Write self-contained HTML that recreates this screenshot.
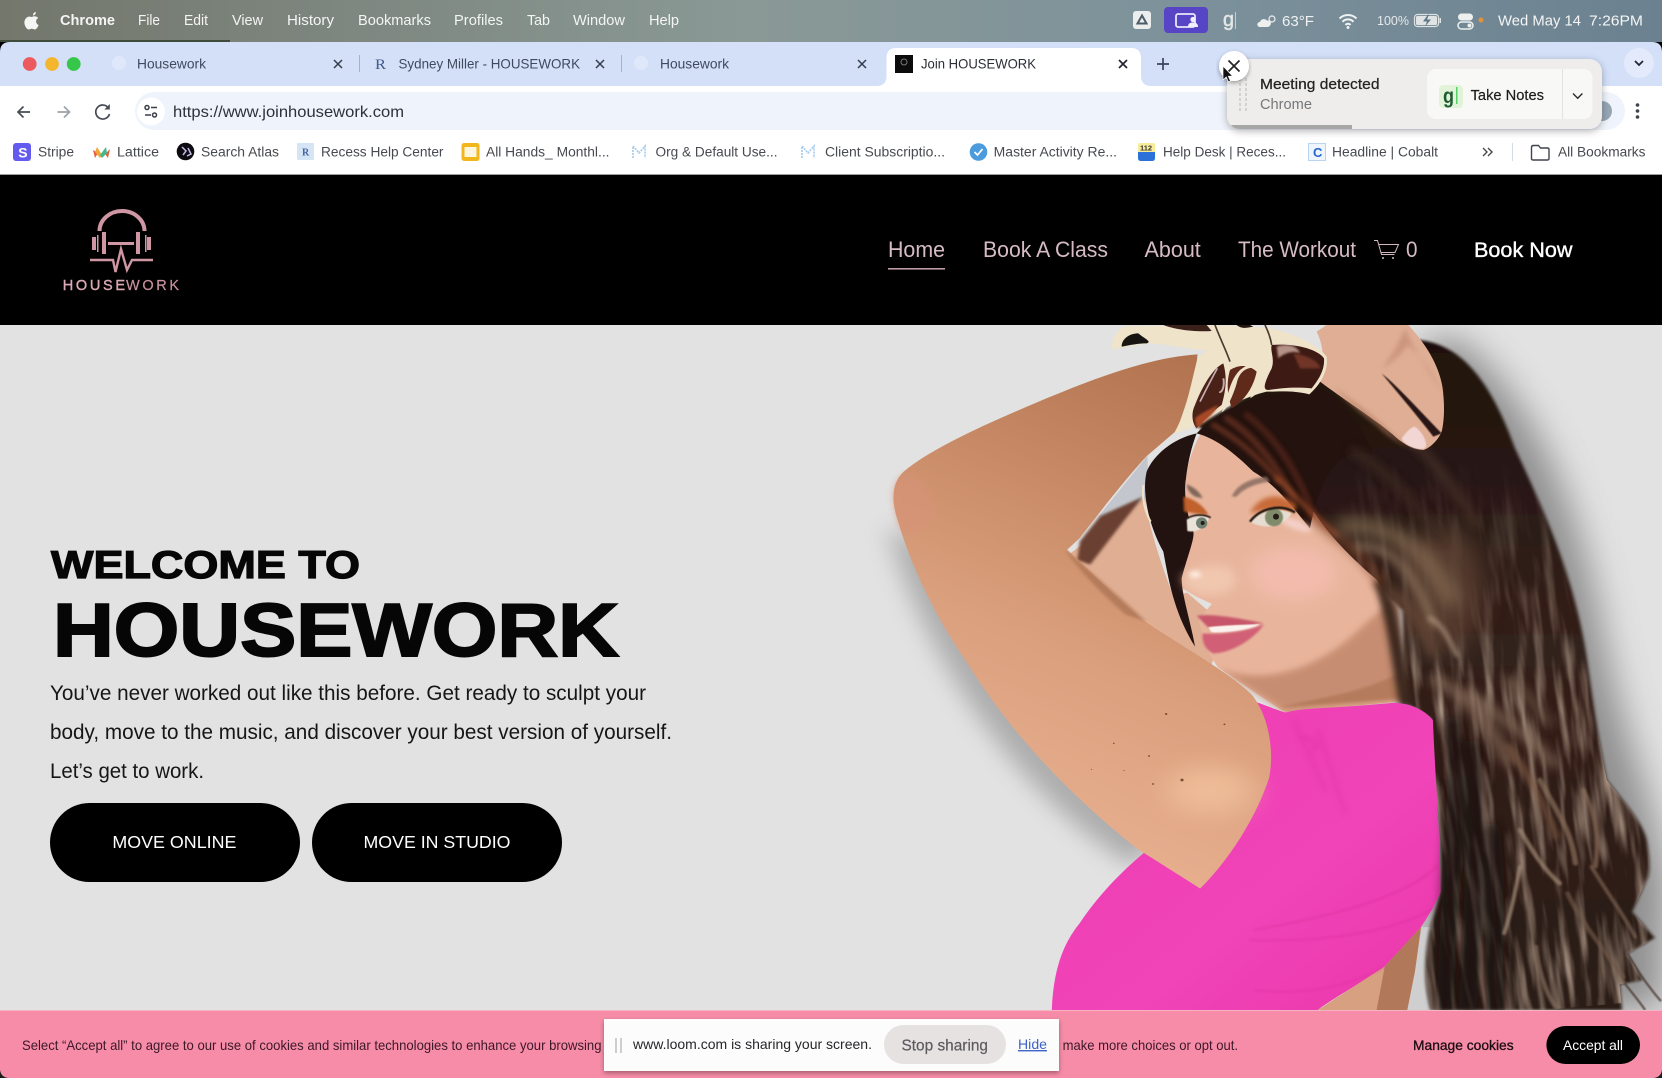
<!DOCTYPE html>
<html><head><meta charset="utf-8"><title>Join HOUSEWORK</title>
<style>
html,body{margin:0;padding:0;background:#000;width:1662px;height:1078px;overflow:hidden}
svg{display:block}
svg svg.v{overflow:visible}
text{font-family:"Liberation Sans",sans-serif;white-space:pre}
.m{font-size:14.5px;fill:#f4f5f4}
.t{font-size:14px;fill:#3f4a5e}
.b{font-size:13.5px;fill:#474a50}
.n{font-size:22px;fill:#d6bbc5}
.c{font-size:14px;fill:#3c1828}
</style></head><body>
<svg width="1662" height="1078" viewBox="0 0 1662 1078" xmlns="http://www.w3.org/2000/svg">
<defs>
<linearGradient id="menu" x1="0" x2="1" y1="0" y2="0"><stop offset="0" stop-color="#73776c"/><stop offset=".45" stop-color="#8a9996"/><stop offset=".7" stop-color="#7d929b"/><stop offset="1" stop-color="#6b8190"/></linearGradient>
<linearGradient id="arm" x1="0.75" y1="0" x2="0.45" y2="1"><stop offset="0" stop-color="#b27450"/><stop offset=".3" stop-color="#c88a66"/><stop offset=".6" stop-color="#dba07e"/><stop offset="1" stop-color="#eab393"/></linearGradient>
<linearGradient id="hair" x1="0" y1="0" x2="0" y2="1"><stop offset="0" stop-color="#1f110d"/><stop offset=".45" stop-color="#33201a"/><stop offset="1" stop-color="#2a1c16"/></linearGradient>
<linearGradient id="top" x1="0" y1="0" x2="1" y2="1"><stop offset="0" stop-color="#ee3cb1"/><stop offset=".6" stop-color="#f044b8"/><stop offset="1" stop-color="#ea36aa"/></linearGradient>
<linearGradient id="fade" x1="0" y1="0" x2="0" y2="1"><stop offset=".2" stop-color="#000"/><stop offset=".55" stop-color="#fff"/></linearGradient>
<mask id="fadem" maskUnits="userSpaceOnUse" x="0" y="0" width="1568" height="1568"><rect width="1568" height="1568" fill="url(#fade)"/></mask>
<filter id="b1" filterUnits="userSpaceOnUse" x="-300" y="-300" width="2400" height="2400"><feGaussianBlur stdDeviation="1.200"/></filter>
<filter id="b3" filterUnits="userSpaceOnUse" x="-300" y="-300" width="2400" height="2400"><feGaussianBlur stdDeviation="3"/></filter>
<filter id="b6" filterUnits="userSpaceOnUse" x="-300" y="-300" width="2400" height="2400"><feGaussianBlur stdDeviation="7"/></filter>
<filter id="b14" filterUnits="userSpaceOnUse" x="-300" y="-300" width="2400" height="2400"><feGaussianBlur stdDeviation="14"/></filter>
<filter id="b20" filterUnits="userSpaceOnUse" x="-300" y="-300" width="2400" height="2400"><feGaussianBlur stdDeviation="24"/></filter>
<filter id="b40" filterUnits="userSpaceOnUse" x="-300" y="-300" width="2400" height="2400"><feGaussianBlur stdDeviation="36"/></filter>
<filter id="tex" filterUnits="userSpaceOnUse" x="1000" y="0" width="600" height="1568"><feTurbulence type="fractalNoise" baseFrequency=".05 .005" numOctaves="3" seed="7"/><feColorMatrix type="matrix" values="0 0 0 0 .42  0 0 0 0 .31  0 0 0 0 .24  0 0 2.200 0 -.98"/><feGaussianBlur stdDeviation="1.500"/></filter>
<filter id="sh" x="-10%" y="-20%" width="120%" height="150%"><feDropShadow dx="0" dy="2" stdDeviation="4" flood-color="#000" flood-opacity=".3"/></filter>
<filter id="sh2" x="-10%" y="-20%" width="120%" height="150%"><feDropShadow dx="0" dy="2" stdDeviation="2.500" flood-color="#000" flood-opacity=".35"/></filter>
<clipPath id="photo"><rect x="0" y="12" width="1568" height="1556"/></clipPath>
<clipPath id="hairclip"><path d="M1085 45C1170 50 1230 130 1280 290 1340 440 1395 580 1420 760 1432 860 1445 960 1460 1045 1490 1090 1530 1140 1538 1181 1545 1230 1545 1260 1538 1272L1510 1345 1554 1404 1500 1440 1530 1500 1485 1510 1490 1568H1116C1100 1500 1105 1440 1113 1390L1135 1300C1140 1200 1132 1100 1120 1045L1115 905 1062 866V660L660 240 790 150Z"/></clipPath>
<clipPath id="heroclip"><rect x="860" y="325" width="802" height="685"/></clipPath>
</defs>

<!-- macOS menu bar -->
<rect width="1662" height="42" fill="url(#menu)"/>
<rect x="0" y="40" width="230" height="2" fill="#3f4c3b"/>
<path d="M33 15.500c1.800-.2 3-1.700 2.900-3.500-1.800.2-3.200 1.800-2.900 3.500zM30 16.500c-3.200 0-5.600 2.600-5.600 6 0 3.200 2.400 7 4.400 7 1 0 1.500-.7 3-.7s1.900.7 3 .7c1.500 0 3-2.200 3.800-4.500-3.300-1.500-3.300-5.500-.3-7-1-1.200-2.500-1.800-3.800-1.800-1.500 0-2.300.8-3.100.8-.7 0-1.500-.5-1.400-.5z" fill="#f5f5f3"/>
<text class="m" x="60" y="25" textLength="55" lengthAdjust="spacingAndGlyphs" font-weight="700">Chrome</text>
<text class="m" x="138" y="25" textLength="22" lengthAdjust="spacingAndGlyphs">File</text>
<text class="m" x="184" y="25" textLength="24" lengthAdjust="spacingAndGlyphs">Edit</text>
<text class="m" x="232" y="25" textLength="31" lengthAdjust="spacingAndGlyphs">View</text>
<text class="m" x="287" y="25" textLength="47" lengthAdjust="spacingAndGlyphs">History</text>
<text class="m" x="358" y="25" textLength="73" lengthAdjust="spacingAndGlyphs">Bookmarks</text>
<text class="m" x="454" y="25" textLength="49" lengthAdjust="spacingAndGlyphs">Profiles</text>
<text class="m" x="527" y="25" textLength="23" lengthAdjust="spacingAndGlyphs">Tab</text>
<text class="m" x="573" y="25" textLength="52" lengthAdjust="spacingAndGlyphs">Window</text>
<text class="m" x="649" y="25" textLength="30" lengthAdjust="spacingAndGlyphs">Help</text>

<rect x="1133" y="11" width="18" height="18" rx="3" fill="#eceeee"/>
<path d="M1142 15.500l4.500 8h-9z" fill="none" stroke="#4c5c68" stroke-width="2"/>
<rect x="1164" y="7" width="44" height="26" rx="4" fill="#5646c6"/>
<rect x="1176" y="14" width="19" height="13" rx="2" fill="none" stroke="#e9e6fb" stroke-width="1.800"/>
<circle cx="1193" cy="19.500" r="2.600" fill="#f2f0ff"/><path d="M1188 27c0-3.500 2-4.500 5-4.500s5 1 5 4.500z" fill="#f2f0ff"/>
<text x="1223" y="26" font-size="20" fill="#e3e6e6" stroke="#e3e6e6" stroke-width=".5" textLength="11" lengthAdjust="spacingAndGlyphs">g</text><rect x="1235" y="12" width="1" height="17" fill="#c5cfd2"/>
<path d="M1260 27c-3.500 0-3.500-5 0-5 .5-3 5-4 7-1.500 3.500-.5 5 3 3 5-.5 1-1.500 1.500-3 1.500z" fill="#eef0f0"/><circle cx="1272" cy="19" r="3" fill="none" stroke="#eef0f0" stroke-width="1.200"/>
<text x="1282" y="26" font-size="15" fill="#f0f2f2" textLength="32" lengthAdjust="spacingAndGlyphs">63°F</text>
<path d="M1339.500 18.500a12 12 0 0 1 17 0M1342.500 21.800a7.500 7.500 0 0 1 11 0M1345.500 25a3.200 3.200 0 0 1 5 0" fill="none" stroke="#f0f2f2" stroke-width="2"/><circle cx="1348" cy="27.500" r="1.500" fill="#f0f2f2"/>
<text x="1377" y="25" font-size="12.500" fill="#e6eaea" textLength="32" lengthAdjust="spacingAndGlyphs">100%</text>
<rect x="1414.500" y="14.500" width="24" height="12" rx="3" fill="none" stroke="#dfe3e3" stroke-width="1.200"/><rect x="1416" y="16" width="21" height="9" rx="1.500" fill="#dfe3e3"/><path d="M1428 14.500l-5 7h4l-2 5 6-7h-4l2-5z" fill="#5f7786"/><rect x="1439.500" y="18" width="1.500" height="5" fill="#dfe3e3"/>
<rect x="1458" y="13.500" width="15" height="7" rx="3.500" fill="#eef0f0"/><rect x="1458" y="22" width="15" height="7" rx="3.500" fill="none" stroke="#eef0f0" stroke-width="1.500"/><circle cx="1469.500" cy="25.500" r="2" fill="#eef0f0"/>
<circle cx="1481" cy="20" r="2.500" fill="#e3913a"/>
<text class="m" x="1498" y="25.500" font-size="15" textLength="83" lengthAdjust="spacingAndGlyphs">Wed May 14</text>
<text class="m" x="1589" y="25.500" font-size="15" textLength="54" lengthAdjust="spacingAndGlyphs">7:26PM</text>

<!-- chrome window -->
<path d="M0 52q0-10 10-10H1652q10 0 10 10V176H0z" fill="#d3e0f8"/>
<rect x="0" y="86" width="1662" height="90" fill="#fff"/>
<circle cx="29.700" cy="64" r="6.900" fill="#ec5a60"/>
<circle cx="52" cy="64" r="6.900" fill="#f5b62f"/>
<circle cx="73.700" cy="64" r="6.900" fill="#35c64a"/>

<circle cx="119" cy="63" r="7" fill="#dfe8fb"/>
<text class="t" x="137" y="68.500" textLength="69" lengthAdjust="spacingAndGlyphs">Housework</text>
<path d="M334 60l8 8M342 60l-8 8" stroke="#333c4c" stroke-width="1.500"/>
<rect x="359" y="55" width="1" height="17" fill="#a7b3c9"/>
<text x="375" y="69" font-size="15" fill="#43588c" textLength="11" lengthAdjust="spacingAndGlyphs" style="font-family:'Liberation Serif',serif">R</text>
<text class="t" x="398.500" y="68.500" textLength="181.500" lengthAdjust="spacingAndGlyphs">Sydney Miller - HOUSEWORK</text>
<path d="M596 60l8 8M604 60l-8 8" stroke="#333c4c" stroke-width="1.500"/>
<rect x="621" y="55" width="1" height="17" fill="#a7b3c9"/>
<circle cx="641" cy="63" r="7" fill="#dfe8fb"/>
<text class="t" x="660" y="68.500" textLength="69" lengthAdjust="spacingAndGlyphs">Housework</text>
<path d="M858 60l8 8M866 60l-8 8" stroke="#333c4c" stroke-width="1.500"/>

<path d="M878 86q8.500-1 8.500-10V58q0-10 10-10H1131q10 0 10 10V76q0 9 9 10z" fill="#fff"/>
<rect x="895" y="55" width="18" height="18" fill="#0c0c0c"/><circle cx="904" cy="62" r="3" fill="none" stroke="#777" stroke-width="1"/>
<text class="t" x="921" y="68.500" style="fill:#2c2f36" textLength="115" lengthAdjust="spacingAndGlyphs">Join HOUSEWORK</text>
<path d="M1119 60l8 8M1127 60l-8 8" stroke="#20242c" stroke-width="1.700"/>
<path d="M1163 58v12M1157 64h12" stroke="#3d4658" stroke-width="1.700"/>
<circle cx="1639" cy="63" r="15" fill="#e2eafb"/>
<path d="M1635 61l4 4 4-4" fill="none" stroke="#20242c" stroke-width="1.700"/>

<!-- toolbar -->
<rect x="135" y="92" width="1490" height="38" rx="19" fill="#eff3fb"/>
<path d="M30 112H18M23.500 106.500L18 112l5.500 5.500" fill="none" stroke="#474c55" stroke-width="1.700"/>
<path d="M57.500 112H69.500M64 106.500L69.500 112 64 117.500" fill="none" stroke="#9fa3aa" stroke-width="1.700"/>
<path d="M108.500 108a7 7 0 1 0 1 6" fill="none" stroke="#474c55" stroke-width="1.700"/><path d="M109.800 104v5.500h-5.500z" fill="#474c55"/>
<circle cx="151" cy="111.500" r="14" fill="#fff"/>
<circle cx="147" cy="107.500" r="2" fill="none" stroke="#3a3f48" stroke-width="1.500"/><path d="M151 107.500h6M145 115h6" stroke="#3a3f48" stroke-width="1.500"/><circle cx="154.500" cy="115" r="2" fill="none" stroke="#3a3f48" stroke-width="1.500"/>
<text x="173" y="117" font-size="16" fill="#2e3138" textLength="231" lengthAdjust="spacingAndGlyphs">https://www.joinhousework.com</text>
<circle cx="1602" cy="111" r="10" fill="#96a6b4"/>
<circle cx="1637.500" cy="105" r="1.800" fill="#3f444c"/><circle cx="1637.500" cy="111" r="1.800" fill="#3f444c"/><circle cx="1637.500" cy="117" r="1.800" fill="#3f444c"/>

<!-- bookmarks -->
<rect x="13" y="143" width="18" height="18" rx="3" fill="#635bf0"/>
<text x="18.300" y="157.500" font-size="14" font-weight="700" fill="#fff">S</text>
<text class="b" x="38" y="156.500" textLength="36" lengthAdjust="spacingAndGlyphs">Stripe</text>
<path d="M93 150l5 3-3 5zM110 149l-5 5 3 4z" fill="#e4603c"/><path d="M97 147l5 8-2 3-5-6z" fill="#f0a63a"/><path d="M106 147l-6 8 2 3 5-5z" fill="#3fba8f"/>
<text class="b" x="117" y="156.500" textLength="42" lengthAdjust="spacingAndGlyphs">Lattice</text>
<circle cx="185.500" cy="151.500" r="8.800" fill="#0b0b10"/><path d="M182 147l4 4-3 4M188 148l3 6-4 2" fill="none" stroke="#c6b9e5" stroke-width="1.500"/>
<text class="b" x="201" y="156.500" textLength="78" lengthAdjust="spacingAndGlyphs">Search Atlas</text>
<rect x="297" y="143" width="17" height="17" rx="1" fill="#d6e5f5"/>
<text x="302" y="155.500" font-size="10" font-weight="700" fill="#47659c" style="font-family:'Liberation Serif',serif">R</text>
<text class="b" x="321" y="156.500" textLength="122.500" lengthAdjust="spacingAndGlyphs">Recess Help Center</text>
<rect x="461.500" y="143" width="18" height="18" rx="2.500" fill="#f3b71e"/><rect x="464.500" y="147" width="12" height="10" fill="#fdf6df"/>
<text class="b" x="486" y="156.500" textLength="123.500" lengthAdjust="spacingAndGlyphs">All Hands_ Monthl...</text>
<path d="M633 158v-12l6 7 6-7v12" fill="none" stroke="#a7cdee" stroke-width="1.700" stroke-dasharray="2 1"/>
<text class="b" x="655.500" y="156.500" textLength="122" lengthAdjust="spacingAndGlyphs">Org &amp; Default Use...</text>
<path d="M802 158v-12l6 7 6-7v12" fill="none" stroke="#a7cdee" stroke-width="1.700" stroke-dasharray="2 1"/>
<text class="b" x="825" y="156.500" textLength="120" lengthAdjust="spacingAndGlyphs">Client Subscriptio...</text>
<circle cx="978.500" cy="152" r="8.800" fill="#4c9bdc"/><path d="M974.500 152l3 3 5-6" fill="none" stroke="#fff" stroke-width="1.700"/>
<text class="b" x="993.700" y="156.500" textLength="123.300" lengthAdjust="spacingAndGlyphs">Master Activity Re...</text>
<rect x="1138" y="143" width="17" height="17" rx="2" fill="#f7ec9a"/><path d="M1138 152h17v6q0 3-3 3h-11q-3 0-3-3z" fill="#2c70d9"/>
<text x="1140" y="150.500" font-size="7.500" font-weight="700" fill="#333">112</text>
<text class="b" x="1163" y="156.500" textLength="123" lengthAdjust="spacingAndGlyphs">Help Desk | Reces...</text>
<rect x="1308.500" y="143.500" width="17" height="17" fill="#eef5fe" stroke="#b9d4f0"/>
<text x="1313" y="157" font-size="13" font-weight="700" fill="#2566c9">C</text>
<text class="b" x="1332" y="156.500" textLength="106" lengthAdjust="spacingAndGlyphs">Headline | Cobalt</text>
<path d="M1483 148l4 4-4 4M1488 148l4 4-4 4" fill="none" stroke="#474a50" stroke-width="1.400"/>
<rect x="1512" y="143" width="1" height="18" fill="#d2dbe8"/>
<path d="M1531.500 147.500q0-2 2-2h5l2 2.500h7q1.500 0 1.500 1.500v9q0 1.500-1.500 1.500h-14.500q-1.500 0-1.500-1.500z" fill="none" stroke="#3f444c" stroke-width="1.400"/>
<text class="b" x="1558" y="156.500" textLength="87.500" lengthAdjust="spacingAndGlyphs">All Bookmarks</text>
<rect x="0" y="174" width="1662" height="1" fill="#9c9ea2"/>

<!-- site nav -->
<rect x="0" y="175" width="1662" height="150" fill="#000"/>
<path d="M99.500 231a22.500 20 0 0 1 45 0" fill="none" stroke="#cf96a3" stroke-width="4"/>
<g fill="#cf96a3">
<rect x="92" y="237" width="4" height="13"/><rect x="97" y="235" width="1.500" height="17"/><rect x="102" y="232" width="4" height="22"/>
<rect x="136" y="232" width="4" height="22"/><rect x="145" y="235" width="1.500" height="17"/><rect x="147" y="237" width="4" height="13"/>
<rect x="108" y="242" width="26" height="3"/>
</g>
<path d="M90 260H113L115.500 272 121 249 127 270 132 260H153" fill="none" stroke="#cf96a3" stroke-width="2.400"/>
<text x="62.700" y="290" font-size="14.500" fill="#dcaab5" stroke="#dcaab5" stroke-width=".4" textLength="62.300" lengthAdjust="spacing">HOUSE</text>
<text x="126" y="290" font-size="14.500" fill="#c9929f" stroke="#c9929f" stroke-width=".2" textLength="53" lengthAdjust="spacing">WORK</text>

<text class="n" x="888" y="257" textLength="57" lengthAdjust="spacingAndGlyphs">Home</text>
<rect x="888" y="268" width="57" height="1.600" fill="#bc9aa6"/>
<text class="n" x="983" y="257" textLength="125" lengthAdjust="spacingAndGlyphs">Book A Class</text>
<text class="n" x="1144.500" y="257" textLength="56.300" lengthAdjust="spacingAndGlyphs">About</text>
<text class="n" x="1238" y="257" textLength="118" lengthAdjust="spacingAndGlyphs">The Workout</text>
<path d="M1374 240.500h3.500l4 14h13M1378.500 244.500h20l-3.500 8h-14.500" fill="none" stroke="#d3b8c2" stroke-width="1"/>
<circle cx="1383" cy="258" r="1" fill="#d3b8c2"/><circle cx="1393" cy="258" r="1" fill="#d3b8c2"/>
<text class="n" x="1406" y="257" textLength="11.500" lengthAdjust="spacingAndGlyphs">0</text>
<text x="1474" y="257" font-size="21" fill="#fff" stroke="#fff" stroke-width=".35" textLength="98.500" lengthAdjust="spacingAndGlyphs">Book Now</text>

<!-- hero -->
<rect x="0" y="325" width="1662" height="690" fill="#e2e2e2"/>
<svg x="860" y="320" width="802" height="690" viewBox="0 0 1568 1568" preserveAspectRatio="none">
<g clip-path="url(#photo)">
<rect x="0" y="0" width="1568" height="1568" fill="#e2e2e2"/>
<!-- cast shadows -->
<path d="M1150 30C1290 130 1400 380 1450 700 1490 950 1568 1130 1580 1300L1568 1568H1100V60Z" fill="#707070" opacity=".72" filter="url(#b40)"/>
<path d="M55 470C105 710 285 1070 540 1245L620 1100 300 600Z" fill="#8a8a8a" opacity=".6" filter="url(#b20)"/>
<polygon points="1070,1568 1098,1380 1120,1380 1120,1568" fill="#cfcfcf"/>
<!-- hair base -->
<path d="M1085 45C1170 50 1230 130 1280 290 1340 440 1395 580 1420 760 1432 860 1445 960 1460 1045 1490 1090 1530 1140 1538 1181 1545 1230 1545 1260 1538 1272L1510 1345 1554 1404 1500 1440 1530 1500 1485 1510 1490 1568H1116C1100 1500 1105 1440 1113 1390L1135 1300C1140 1200 1132 1100 1120 1045L1115 905 1062 866V660L660 240 790 150Z" fill="url(#hair)" filter="url(#b3)"/>
<path d="M1500 1440C1520 1480 1545 1520 1566 1548M1490 1500C1510 1530 1525 1550 1535 1568" fill="none" stroke="#4a382e" stroke-width="5" opacity=".7" filter="url(#b1)"/>
<g clip-path="url(#hairclip)"><g mask="url(#fadem)"><rect x="1000" y="0" width="600" height="1568" filter="url(#tex)" transform="rotate(-6 1300 800)"/></g></g>
<!-- gap behind arm -->
<polygon points="465,448 562,308 565,412" fill="#c3c7cd"/>
<!-- back arm -->
<path d="M400 540L556 405C565 470 590 560 612 625L640 620 720 700 680 800 600 750 480 650Z" fill="#e0ae92"/>
<path d="M430 503L469 446 554 401 515 458 450 556 425 545Z" fill="#6b4030" filter="url(#b3)"/>
<!-- neck + face -->
<path d="M680 235C650 280 635 340 632 410 628 450 640 500 640 520 630 550 625 590 630 610L660 630 688 645 662 680 675 745 700 790 790 860 832 892 1062 866 1050 660 1010 590C950 530 900 470 860 385 800 300 740 260 680 235Z" fill="#e8b59c"/>
<path d="M700 790C780 830 880 800 960 720 1000 680 1030 640 1050 640L1064 866 832 892Z" fill="#c08468" opacity=".8" filter="url(#b6)"/>
<path d="M820 880L1060 860 1058 800C980 850 890 860 820 880Z" fill="#a9704f" opacity=".6" filter="url(#b3)"/>
<path d="M1015 590C1040 650 1050 760 1068 880" fill="none" stroke="#3a261d" stroke-width="26" filter="url(#b6)"/>
<!-- top -->
<path d="M750 860C785 870 810 885 832 892 870 880 900 885 1042 870 1085 870 1110 895 1120 909 1125 1050 1135 1180 1135 1300 1125 1330 1105 1365 1097 1379 1065 1425 1040 1450 1026 1469 990 1500 920 1545 895 1568H375C378 1480 395 1420 430 1370 470 1300 520 1245 557 1209L620 1180 760 1000Z" fill="url(#top)"/>
<path d="M895 1568L1026 1469 1097 1379 1085 1480 1070 1568Z" fill="#d7a080"/>
<path d="M1026 1469L1097 1379 1085 1480 1070 1568H1010Z" fill="#a86f50" opacity=".8"/>
<!-- arm -->
<path d="M660 78C560 85 440 140 310 205 220 250 130 300 85 345 62 370 60 410 75 460 100 560 150 680 210 780 290 930 400 1070 540 1200L665 1292C720 1230 775 1130 800 1040 810 980 800 900 765 850 720 800 640 750 547 677 500 630 450 570 405 522L430 495C460 450 520 360 560 310L620 250 655 130Z" fill="url(#arm)"/>
<path d="M85 350C60 375 60 410 75 460 85 500 110 490 140 450 150 400 120 350 85 350Z" fill="#d79378" opacity=".6" filter="url(#b6)"/>
<path d="M400 522C450 570 510 630 560 685L520 670C470 620 430 570 400 522Z" fill="#a26b4b" opacity=".6" filter="url(#b3)"/>
</g>
</svg>

<!-- lower photo detail -->
<g clip-path="url(#heroclip)">
<svg class="v" x="1040" y="680" width="622" height="330" viewBox="0 0 1568 990" preserveAspectRatio="none">
<ellipse cx="430" cy="330" rx="110" ry="70" fill="#f9cfa8" opacity=".55" filter="url(#b40)"/>
<g fill="#7c4a30"><circle cx="318" cy="102" r="3"/><circle cx="465" cy="133" r="2.500"/><circle cx="186" cy="190" r="2"/><circle cx="275" cy="228" r="2.500"/><circle cx="358" cy="300" r="4"/><circle cx="285" cy="312" r="2.500"/><circle cx="130" cy="268" r="1.500"/><circle cx="212" cy="272" r="1.500"/></g>
<g fill="none" stroke-linecap="round">
<path d="M640 120C660 180 700 280 720 330M700 150C720 210 740 300 770 400" stroke="#d62c98" stroke-width="10" opacity=".3" filter="url(#b6)"/>
<path d="M660 175C680 165 710 195 690 210" stroke="#db309c" stroke-width="14" opacity=".4" filter="url(#b6)"/>
<path d="M1000 560C930 640 780 700 540 750" stroke="#d02a92" stroke-width="5" opacity=".4" filter="url(#b3)"/>
<path d="M1000 680C930 730 790 790 530 780" stroke="#d02a92" stroke-width="5" opacity=".35" filter="url(#b3)"/>
<path d="M870 860C790 910 690 950 540 930" stroke="#d02a92" stroke-width="5" opacity=".3" filter="url(#b3)"/>
<path d="M1040 130C1060 330 1030 600 1020 985M1090 200C1110 400 1090 700 1080 985M1140 450C1160 620 1140 800 1150 985" stroke="#120b08" stroke-width="40" opacity=".7" filter="url(#b14)"/>
<path d="M1000 0C1080 50 1130 130 1180 240" stroke="#8d7260" stroke-width="34" opacity=".65" filter="url(#b14)"/>
<path d="M1080 40C1160 110 1240 170 1290 250" stroke="#957b67" stroke-width="30" opacity=".6" filter="url(#b14)"/>
<path d="M1180 0C1230 40 1260 90 1280 130" stroke="#7f6857" stroke-width="26" opacity=".55" filter="url(#b14)"/>
<path d="M1180 200C1240 300 1270 370 1300 470" stroke="#73513d" stroke-width="20" opacity=".7" filter="url(#b6)"/>
<path d="M1260 300C1300 390 1340 450 1350 550" stroke="#8a6f5c" stroke-width="14" opacity=".7" filter="url(#b3)"/>
<path d="M1210 450C1240 510 1270 570 1310 610" stroke="#a08873" stroke-width="12" opacity=".7" filter="url(#b3)"/>
<path d="M1370 330C1400 400 1410 480 1400 560" stroke="#8d6f5b" stroke-width="12" opacity=".65" filter="url(#b3)"/>
<path d="M1210 560C1200 620 1190 690 1170 760" stroke="#a9927e" stroke-width="10" opacity=".7" filter="url(#b3)"/>
<path d="M1390 560C1430 640 1470 700 1500 770" stroke="#7d6353" stroke-width="10" opacity=".7" filter="url(#b3)"/>
<path d="M1330 640C1360 720 1410 790 1470 890" stroke="#6e5647" stroke-width="12" opacity=".7" filter="url(#b3)"/>
<path d="M1250 800C1255 860 1270 930 1300 980" stroke="#85705f" stroke-width="12" opacity=".7" filter="url(#b3)"/>
</g>
</svg>

<!-- upper photo detail: 3 units per px -->
<svg class="v" x="1080" y="325" width="400" height="330" viewBox="0 0 1200 990">
<path d="M350 325C420 250 560 195 720 190 800 230 860 330 880 390 780 360 720 450 690 610 640 550 590 480 520 440 470 390 410 340 350 325Z" fill="#23120e"/>
<path d="M350 325C280 340 220 390 200 440 185 500 205 600 250 680 265 760 280 860 345 965 330 880 305 810 305 760 320 700 345 640 340 620 320 570 310 500 318 460 325 400 340 350 350 325Z" fill="#221210"/>
<path d="M190 480C185 520 195 560 212 590" stroke="#f0e3c8" stroke-width="6" fill="none"/>
<ellipse cx="640" cy="745" rx="130" ry="80" fill="#f4bdb0" opacity=".85" filter="url(#b20)"/>
<ellipse cx="650" cy="600" rx="50" ry="14" fill="#f6d3cd" opacity=".9" filter="url(#b6)" transform="rotate(20 650 600)"/>
<path d="M305 760C330 730 400 710 450 730 480 760 470 800 420 805 370 815 330 810 305 760Z" fill="#f3cbb2" opacity=".85" filter="url(#b14)"/>
<ellipse cx="345" cy="748" rx="18" ry="10" fill="#fff2ea" opacity=".9" filter="url(#b6)"/>
<path d="M455 515C470 480 510 460 560 455L570 470C530 475 490 490 470 515Z" fill="#8a6c60" opacity=".85" filter="url(#b3)"/>
<path d="M320 478C340 485 360 500 368 520L345 515C330 505 322 495 320 478Z" fill="#6f5a50" opacity=".85" filter="url(#b3)"/>
<path d="M510 565C530 520 590 490 650 540L640 565C600 550 550 555 510 565Z" fill="#c4622e" opacity=".9" filter="url(#b6)"/>
<path d="M310 515C340 520 375 545 385 570L345 565 312 560Z" fill="#bf5d28" opacity=".95" filter="url(#b3)"/>
<path d="M510 590C540 555 600 545 635 565 615 600 560 620 510 590Z" fill="#e6dccf" filter="url(#b1)"/>
<circle cx="582" cy="577" r="27" fill="#7f8b6a" filter="url(#b1)"/><circle cx="588" cy="575" r="9" fill="#241d17"/>
<path d="M510 590C540 550 600 535 645 562" fill="none" stroke="#1e120c" stroke-width="7" filter="url(#b1)"/>
<path d="M320 580C340 570 370 570 388 578 380 605 350 625 322 618Z" fill="#e9e3da" filter="url(#b1)"/>
<circle cx="365" cy="594" r="17" fill="#6f8070"/><circle cx="368" cy="594" r="6" fill="#241d17"/>
<path d="M318 582C340 568 370 566 392 578" fill="none" stroke="#1e120c" stroke-width="5" filter="url(#b1)"/>
<path d="M350 872C400 865 480 880 552 895 500 905 440 905 385 908Z" fill="#c7566a" filter="url(#b3)"/>
<path d="M385 907C430 900 500 900 540 897 520 915 440 925 395 922Z" fill="#fbf3ee" filter="url(#b1)"/>
<path d="M368 925C420 930 500 920 552 898 520 945 450 985 400 985 375 975 365 950 368 925Z" fill="#d15f76" filter="url(#b3)"/>
<ellipse cx="1090" cy="790" rx="120" ry="190" fill="#5a4132" opacity=".85" filter="url(#b40)"/>
<g fill="none" stroke-linecap="round">
<path d="M400 300C470 340 540 400 600 470" stroke="#7c3b25" stroke-width="14" opacity=".8" filter="url(#b6)"/>
<path d="M440 280C520 330 590 420 640 520" stroke="#6a3020" stroke-width="18" opacity=".8" filter="url(#b6)"/>
<path d="M500 270C580 330 650 430 700 570" stroke="#5a281a" stroke-width="18" opacity=".75" filter="url(#b6)"/>
<path d="M590 460C640 500 690 570 770 630" stroke="#a3502c" stroke-width="14" opacity=".7" filter="url(#b6)"/>
<path d="M700 580C780 640 850 690 900 770" stroke="#7c3d28" stroke-width="24" opacity=".7" filter="url(#b14)"/>
<path d="M790 605C900 590 1040 660 1110 820" stroke="#8f7359" stroke-width="46" opacity=".8" filter="url(#b20)"/>
<path d="M830 665C930 660 1000 730 1060 900" stroke="#a88c71" stroke-width="20" opacity=".75" filter="url(#b14)"/>
<path d="M930 800C990 840 1030 900 1060 985" stroke="#6c4d3a" stroke-width="28" opacity=".75" filter="url(#b14)"/>
<path d="M1050 880C1090 900 1110 950 1130 990" stroke="#b39a82" stroke-width="14" opacity=".7" filter="url(#b6)"/>
<path d="M820 380C900 420 1000 520 1080 640" stroke="#3e2a21" stroke-width="24" opacity=".9" filter="url(#b14)"/>
<path d="M1010 360C1080 430 1130 500 1190 600" stroke="#513a2f" stroke-width="20" opacity=".8" filter="url(#b14)"/>
</g>
<path d="M720 170C735 110 730 60 710 20L740 0H985C1040 60 1085 130 1090 210 1095 260 1090 300 1085 320 1075 345 1050 370 1030 375 990 370 960 350 940 330 880 280 800 230 720 170Z" fill="#dfae94"/>
<path d="M905 130C930 100 955 60 975 10 1000 70 1040 130 1088 205 1075 175 1040 110 985 60 960 90 935 115 905 130Z" fill="#c79078" opacity=".8" filter="url(#b6)"/>
<path d="M760 185C820 230 880 270 940 330 960 350 990 370 1030 375 985 375 930 340 890 300 850 270 800 230 760 185Z" fill="#b57d62" opacity=".7" filter="url(#b6)"/>
<path d="M905 145C960 190 1030 270 1085 325L1060 335C1010 270 950 200 905 145Z" fill="#2a1712" filter="url(#b1)"/>
<path d="M965 340C980 320 995 305 1005 305 1025 320 1040 345 1038 365 1030 378 1000 372 980 358 970 350 965 345 965 340Z" fill="#f2d6d4" filter="url(#b1)"/>
<path d="M95 72C95 35 115 8 140 4L400 0 560 8C640 25 710 55 740 95 745 135 725 175 688 208 640 195 590 200 560 200 500 215 420 250 375 290 340 305 310 320 282 325 315 270 330 190 350 110 360 90 370 85 382 75 330 75 260 55 200 55 170 60 120 70 95 72Z" fill="#efe3ca"/>
<path d="M125 65C125 40 150 25 175 25 200 45 215 50 200 55 170 55 145 62 125 65Z" fill="#171412"/>
<path d="M250 0C280 12 340 22 395 18L380 0Z" fill="#3a2018"/>
<path d="M470 0C480 8 490 12 520 5L510 0Z" fill="#241510"/>
<path d="M575 60C640 55 710 70 732 100 735 135 715 165 695 190 640 185 600 190 565 195 545 195 555 170 575 130 585 100 570 80 575 60Z" fill="#3e1a14"/>
<path d="M590 65C620 55 650 60 660 85 640 75 610 85 595 100Z" fill="#c9a79b" opacity=".85" filter="url(#b3)"/>
<path d="M640 85C680 90 720 110 720 130L660 130Z" fill="#6f3626" filter="url(#b3)"/>
<path d="M450 135C490 110 520 130 530 140 520 190 490 230 455 250 440 200 440 170 450 135Z" fill="#5f2a1a"/>
<path d="M480 135C520 105 555 100 565 115 575 140 550 200 510 220 530 180 545 140 530 130 510 125 480 130 470 175 460 210 440 255 425 262 445 220 445 170 480 135Z" fill="#efe3ca"/>
<path d="M430 115C395 130 360 200 345 240 330 270 340 300 350 310 385 270 410 250 425 240 440 190 440 150 430 115Z" fill="#4a2117"/>
<path d="M412 130C390 170 375 200 360 230" stroke="#d9c6cf" stroke-width="5" fill="none" opacity=".85"/>
<path d="M430 160C435 185 425 205 418 200" stroke="#e5cdd4" stroke-width="6" fill="none" opacity=".8"/>
<path d="M345 280C370 260 395 250 415 240 400 270 370 295 350 310Z" fill="#a84a28" filter="url(#b3)"/>
<path d="M405 0C420 40 440 80 450 110M555 0C565 20 572 40 575 60" stroke="#4a3a30" stroke-width="5" fill="none"/>
</svg>
</g>

<!-- hero copy -->
<text x="51" y="578" font-size="38.500" font-weight="700" fill="#060606" stroke="#060606" stroke-width="1.200" textLength="309" lengthAdjust="spacingAndGlyphs">WELCOME TO</text>
<text x="53" y="656" font-size="75.500" font-weight="700" fill="#060606" stroke="#060606" stroke-width="2" textLength="566" lengthAdjust="spacingAndGlyphs">HOUSEWORK</text>
<text x="50" y="700" font-size="21.500" fill="#161616" textLength="596" lengthAdjust="spacingAndGlyphs">You’ve never worked out like this before. Get ready to sculpt your</text>
<text x="50" y="739" font-size="21.500" fill="#161616" textLength="622" lengthAdjust="spacingAndGlyphs">body, move to the music, and discover your best version of yourself.</text>
<text x="50" y="778" font-size="21.500" fill="#161616" textLength="154" lengthAdjust="spacingAndGlyphs">Let’s get to work.</text>
<rect x="50" y="803" width="250" height="79" rx="39.500" fill="#000"/>
<rect x="312" y="803" width="250" height="79" rx="39.500" fill="#000"/>
<text x="112.400" y="848" font-size="17.500" fill="#fff" textLength="124" lengthAdjust="spacingAndGlyphs">MOVE ONLINE</text>
<text x="363.500" y="848" font-size="17.500" fill="#fff" textLength="147" lengthAdjust="spacingAndGlyphs">MOVE IN STUDIO</text>

<!-- meeting popup -->
<rect x="1227" y="59" width="375" height="70" rx="13" fill="#eeedeb" filter="url(#sh)"/>
<path d="M1231 125h121v4h-112q-6 0-9-4z" fill="#a7a7a6"/>
<path d="M1240 78v35M1246 78v35" stroke="#b7b7b7" stroke-width="1" stroke-dasharray="3 2"/>
<text x="1260" y="89" font-size="15" fill="#232323" stroke="#232323" stroke-width=".25" textLength="119.500" lengthAdjust="spacingAndGlyphs">Meeting detected</text>
<text x="1260" y="109" font-size="15" fill="#75777a" textLength="52" lengthAdjust="spacingAndGlyphs">Chrome</text>
<rect x="1427" y="69" width="165.500" height="50" rx="9" fill="#f8f8f7"/>
<rect x="1562" y="69" width="1" height="50" fill="#e2e2e0"/>
<rect x="1439" y="85" width="24" height="23" rx="4" fill="#e3f3da"/>
<text x="1443" y="103" font-size="21" font-weight="700" fill="#1e5a34" textLength="11" lengthAdjust="spacingAndGlyphs">g</text><rect x="1456" y="87" width="1.500" height="17" fill="#52d36a"/>
<text x="1470.600" y="100" font-size="15" fill="#1d1d1d" stroke="#1d1d1d" stroke-width=".2" textLength="73.400" lengthAdjust="spacingAndGlyphs">Take Notes</text>
<path d="M1573 93.500l4.700 4.700 4.700-4.700" fill="none" stroke="#2c2c2c" stroke-width="1.400"/>
<circle cx="1234" cy="66" r="15" fill="#fff" filter="url(#sh2)"/>
<path d="M1228.500 60.500l11 11M1239.500 60.500l-11 11" stroke="#222" stroke-width="1.700"/>
<path d="M1223 66v14l3.200-3 2.300 5 2-1-2.200-4.800h4.400z" fill="#111" stroke="#fff" stroke-width=".7"/>

<!-- cookie banner -->
<rect x="0" y="1010" width="1662" height="68" fill="#f78ca8"/>
<path d="M0 1070q1 7 8 8H0zM1662 1070q-1 7-8 8h8z" fill="#1c1c1c"/>
<rect x="0" y="1010" width="1662" height="1" fill="#f6b3c3"/>
<text class="c" x="22" y="1050" textLength="579.500" lengthAdjust="spacingAndGlyphs">Select “Accept all” to agree to our use of cookies and similar technologies to enhance your browsing</text>
<text class="c" x="1062.600" y="1050" textLength="175.400" lengthAdjust="spacingAndGlyphs">make more choices or opt out.</text>
<text x="1413" y="1050" font-size="14" fill="#1b0d13" stroke="#1b0d13" stroke-width=".3" textLength="100.600" lengthAdjust="spacingAndGlyphs">Manage cookies</text>
<rect x="1546.400" y="1026" width="93.600" height="38" rx="19" fill="#000"/>
<text x="1563" y="1050" font-size="14" fill="#fff" textLength="60" lengthAdjust="spacingAndGlyphs">Accept all</text>

<!-- loom bar -->
<rect x="604" y="1019" width="455" height="52" fill="#fdfcfc" filter="url(#sh2)"/>
<path d="M616 1038v15M621 1038v15" stroke="#c9c9c9" stroke-width="1.800"/>
<text x="633" y="1049" font-size="14" fill="#26262a" textLength="239" lengthAdjust="spacingAndGlyphs">www.loom.com is sharing your screen.</text>
<rect x="884" y="1025" width="122" height="39" rx="19.500" fill="#e6e2e2"/>
<text x="901.500" y="1050.500" font-size="15.500" fill="#5b5b5f" stroke="#5b5b5f" stroke-width=".2" textLength="86.500" lengthAdjust="spacingAndGlyphs">Stop sharing</text>
<text x="1018" y="1049" font-size="14" fill="#3f64c9" textLength="29" lengthAdjust="spacingAndGlyphs" text-decoration="underline">Hide</text>
</svg>
</body></html>
